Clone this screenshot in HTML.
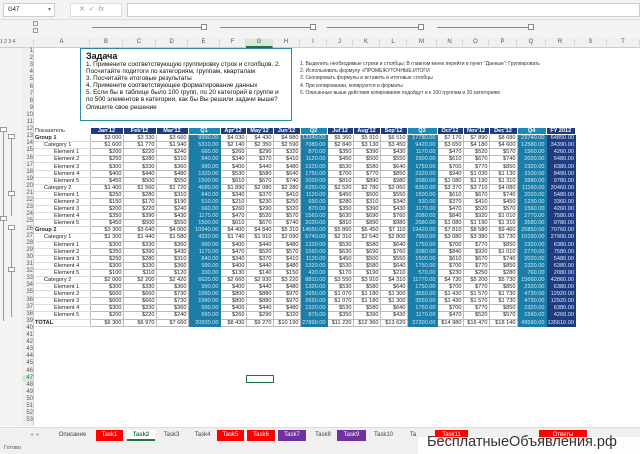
<!DOCTYPE html>
<html><head><meta charset="utf-8"><style>
*{margin:0;padding:0;box-sizing:border-box}
body{width:640px;height:454px;overflow:hidden;background:#fff;font-family:"Liberation Sans","DejaVu Sans",sans-serif;position:relative;color:#222}
.a{position:absolute}
#top{left:0;top:0;width:640px;height:20px;background:#f3f3f3;border-bottom:1px solid #ddd}
#ol{left:0;top:20px;width:640px;height:18px;background:#f3f3f3}
#ch{left:0;top:38px;width:640px;height:10px;background:#f0f0f0;border-bottom:1px solid #ccc;font-size:6px;color:#555}
#ch span{position:absolute;top:1px;text-align:center;border-right:1px solid #d6d6d6;height:9px}
#rh{left:22px;top:48px;width:12px;height:378px;background:#f0f0f0;border-right:1px solid #ccc}
#rh div{position:absolute;left:0;width:11px;text-align:right;font-size:6px;line-height:7px;color:#555}
#gut{left:0;top:48px;width:22px;height:378px;background:#f3f3f3}
table{position:absolute;left:34px;top:127px;border-collapse:collapse;table-layout:fixed;font-size:5.6px}
td{height:7.1px;line-height:6px;padding:0 1px;text-align:right;border:1px solid #bbb;white-space:nowrap;overflow:hidden}
td.l{text-align:left;border:none;border-bottom:1px solid #ddd}
td.q{background:#1b7ea8;color:#cfeaf5;border-color:#1b7ea8}
td.f{background:#1f3c80;color:#dde6ff;border-color:#1f3c80}
tr.h td{background:#1f3c80;color:#fff;font-weight:bold;text-align:center;border-color:#fff}
tr.h td.q{background:#1b8ab8;color:#fff}
tr.h td.l{background:#fff;color:#333;font-weight:normal;text-align:left}
.g td.l{font-weight:bold}
.c td.l{padding-left:10px}
.e td.l{padding-left:20px}
#box{left:80px;top:48px;width:212px;height:73px;border:1.5px solid #2a8aa0;background:#fff;padding:3px 5px;font-size:6.4px;line-height:7.1px;color:#111}
#box b{font-size:9px;line-height:9px;display:block}
#notes{left:300px;top:61px;font-size:5px;line-height:7.2px;color:#333}
#tabs{left:0;top:427px;width:640px;height:15px;background:#f0f0f0;border-top:1px solid #ddd;font-size:6px}
#tabs span{position:absolute;top:2px;height:11px;line-height:11px;text-align:center;color:#444}
.r{background:#f00;color:#fff!important}.p{background:#7030a0;color:#fff!important}
#st{left:0;top:442px;width:640px;height:12px;background:#f0f0f0;font-size:5.5px;color:#555}
</style></head><body>
<div id="top" class="a">
<div class="a" style="left:3px;top:3px;width:52px;height:14px;background:#fff;border:1px solid #ccc;font-size:6px;line-height:12px;padding-left:4px">G47<span style="position:absolute;right:3px;color:#777">▾</span></div>
<div class="a" style="left:70px;top:3px;width:52px;height:14px;background:#fff;border:1px solid #ddd;font-size:7px;color:#999;line-height:12px;padding-left:8px">✕ &nbsp;✓ &nbsp;<i>fx</i></div>
<div class="a" style="left:127px;top:3px;width:513px;height:14px;background:#fff;border:1px solid #ccc"></div>
</div>
<div id="ol" class="a">
<div class="a" style="left:33px;top:1px;width:5px;height:5px;border:1px solid #999"></div>
<div class="a" style="left:33px;top:8px;width:5px;height:5px;border:1px solid #999"></div>
<div class="a" style="left:92px;top:7px;width:112px;border-top:1px solid #888"></div><div class="a" style="left:201px;top:4px;width:6px;height:6px;border:1px solid #888;background:#fff"></div>
<div class="a" style="left:220px;top:7px;width:92px;border-top:1px solid #888"></div><div class="a" style="left:310px;top:4px;width:6px;height:6px;border:1px solid #888;background:#fff"></div>
<div class="a" style="left:327px;top:7px;width:93px;border-top:1px solid #888"></div><div class="a" style="left:418px;top:4px;width:6px;height:6px;border:1px solid #888;background:#fff"></div>
<div class="a" style="left:437px;top:7px;width:93px;border-top:1px solid #888"></div><div class="a" style="left:528px;top:4px;width:6px;height:6px;border:1px solid #888;background:#fff"></div>
</div>
<div id="ch" class="a">
<span style="left:0;width:34px;font-size:5px;text-align:left">1 2 3 4</span>
<span style="left:34px;width:56px">A</span><span style="left:90px;width:33px">B</span><span style="left:123px;width:33px">C</span><span style="left:156px;width:32px">D</span><span style="left:188px;width:32px">E</span><span style="left:220px;width:26px">F</span><span style="left:246px;width:27px;background:#d6e8d6;border-bottom:2px solid #217346">G</span><span style="left:273px;width:27px">H</span><span style="left:300px;width:27px">I</span><span style="left:327px;width:26px">J</span><span style="left:353px;width:27px">K</span><span style="left:380px;width:27px">L</span><span style="left:407px;width:30px">M</span><span style="left:437px;width:26px">N</span><span style="left:463px;width:26px">O</span><span style="left:489px;width:28px">P</span><span style="left:517px;width:29px">Q</span><span style="left:546px;width:29px">R</span><span style="left:575px;width:32px">S</span><span style="left:607px;width:33px">T</span>
</div>
<div id="gut" class="a">
<div class="a" style="left:3px;top:81px;height:192px;border-left:1px solid #999"></div>
<div class="a" style="left:11px;top:88px;height:80px;border-left:1px solid #999"></div>
<div class="a" style="left:11px;top:179px;height:90px;border-left:1px solid #999"></div>
<div class="a" style="left:0px;top:79px;width:7px;height:5px;border:1px solid #999;background:#fff"></div>
<div class="a" style="left:8px;top:86px;width:7px;height:5px;border:1px solid #999;background:#fff"></div>
<div class="a" style="left:8px;top:143px;width:7px;height:5px;border:1px solid #999;background:#fff"></div>
<div class="a" style="left:0px;top:168px;width:7px;height:5px;border:1px solid #999;background:#fff"></div>
<div class="a" style="left:8px;top:177px;width:7px;height:5px;border:1px solid #999;background:#fff"></div>
<div class="a" style="left:8px;top:219px;width:7px;height:5px;border:1px solid #999;background:#fff"></div>
</div>
<div id="rh" class="a">
<div style="top:0">1</div><div style="top:7.1px">2</div><div style="top:14.2px">3</div><div style="top:21.3px">4</div><div style="top:28.4px">5</div><div style="top:35.5px">6</div><div style="top:42.6px">7</div><div style="top:49.7px">8</div><div style="top:56.8px">9</div><div style="top:63.9px">10</div><div style="top:71px">11</div><div style="top:78.1px">12</div><div style="top:85.2px">13</div><div style="top:92.3px">14</div><div style="top:99.4px">15</div><div style="top:106.5px">16</div><div style="top:113.6px">17</div><div style="top:120.7px">18</div><div style="top:127.8px">19</div><div style="top:134.9px">20</div><div style="top:142px">21</div><div style="top:149.1px">22</div><div style="top:156.2px">23</div><div style="top:163.3px">24</div><div style="top:170.4px">25</div><div style="top:177.5px">26</div><div style="top:184.6px">27</div><div style="top:191.7px">28</div><div style="top:198.8px">29</div><div style="top:205.9px">30</div><div style="top:213px">31</div><div style="top:220.1px">32</div><div style="top:227.2px">33</div><div style="top:234.3px">34</div><div style="top:241.4px">35</div><div style="top:248.5px">36</div><div style="top:255.6px">37</div><div style="top:262.7px">38</div><div style="top:269.8px">39</div><div style="top:276.9px">40</div><div style="top:284px">41</div><div style="top:291.1px">42</div><div style="top:298.2px">43</div><div style="top:305.3px">44</div><div style="top:312.4px">45</div><div style="top:319.5px">46</div><div style="top:326.6px;background:#d6e8d6;color:#217346">47</div><div style="top:333.7px">48</div><div style="top:340.8px">49</div><div style="top:347.9px">50</div><div style="top:355px">51</div><div style="top:362.1px">52</div><div style="top:369.2px">53</div>
</div>
<div id="box" class="a"><b>Задача</b>1. Примените соответствующую группировку строк и столбцов. 2. Посчитайте подитоги по категориям, группам, кварталам<br>3. Посчитайте итоговые результаты<br>4. Примените соответствующее форматирование данных<br>5. Если бы в таблице было 100 групп, по 20 категорий в группе и по 500 элементов в категории, как бы Вы решили задачи выше?<br>Опишите свое решение</div>
<div id="notes" class="a">1. Выделить необходимые строки и столбцы; В главном меню перейти в пункт "Данные"; Группировать<br>2. Использовать формулу «ПРОМЕЖУТОЧНЫЕ.ИТОГИ<br>3. Скопировать формулы и вставить в итоговые столбцы<br>4. При копировании, копируются и форматы<br>5. Описанные выше действия копирования подойдут и к 100 группам и 20 категориям</div>
<table>
<colgroup><col style="width:56px"><col style="width:33px"><col style="width:33px"><col style="width:32px"><col style="width:32px"><col style="width:26px"><col style="width:27px"><col style="width:27px"><col style="width:27px"><col style="width:26px"><col style="width:27px"><col style="width:27px"><col style="width:30px"><col style="width:26px"><col style="width:26px"><col style="width:28px"><col style="width:29px"><col style="width:29px"></colgroup>
<tr class="h"><td class="l">Показатель</td><td>Jan'12</td><td>Feb'12</td><td>Mar'12</td><td class="q">Q1</td><td>Apr'12</td><td>May'12</td><td>Jun'12</td><td class="q">Q2</td><td>Jul'12</td><td>Aug'12</td><td>Sep'12</td><td class="q">Q3</td><td>Oct'12</td><td>Nov'12</td><td>Dec'12</td><td class="q">Q4</td><td>FY 2012</td></tr>
<tr class="g"><td class="l">Group 1</td><td>$3 000</td><td>$3 330</td><td>$3 660</td><td class="q">9990.00</td><td>$4 030</td><td>$4 430</td><td>$4 880</td><td class="q">13340.00</td><td>$5 360</td><td>$5 910</td><td>$6 510</td><td class="q">17780.00</td><td>$7 170</td><td>$7 890</td><td>$8 680</td><td class="q">23740.00</td><td class="f">64850.00</td></tr>
<tr class="c"><td class="l">Category 1</td><td>$1 600</td><td>$1 770</td><td>$1 940</td><td class="q">5310.00</td><td>$2 140</td><td>$2 350</td><td>$2 590</td><td class="q">7080.00</td><td>$2 840</td><td>$3 130</td><td>$3 450</td><td class="q">9420.00</td><td>$3 650</td><td>$4 180</td><td>$4 600</td><td class="q">12580.00</td><td class="f">34390.00</td></tr>
<tr class="e"><td class="l">Element 1</td><td>$200</td><td>$220</td><td>$240</td><td class="q">660.00</td><td>$260</td><td>$290</td><td>$320</td><td class="q">870.00</td><td>$350</td><td>$390</td><td>$430</td><td class="q">1170.00</td><td>$470</td><td>$520</td><td>$570</td><td class="q">1560.00</td><td class="f">4260.00</td></tr>
<tr class="e"><td class="l">Element 2</td><td>$250</td><td>$280</td><td>$310</td><td class="q">840.00</td><td>$340</td><td>$370</td><td>$410</td><td class="q">1120.00</td><td>$450</td><td>$500</td><td>$550</td><td class="q">1500.00</td><td>$610</td><td>$670</td><td>$740</td><td class="q">2020.00</td><td class="f">5480.00</td></tr>
<tr class="e"><td class="l">Element 3</td><td>$300</td><td>$330</td><td>$360</td><td class="q">990.00</td><td>$400</td><td>$440</td><td>$480</td><td class="q">1320.00</td><td>$530</td><td>$580</td><td>$640</td><td class="q">1750.00</td><td>$700</td><td>$770</td><td>$850</td><td class="q">2320.00</td><td class="f">6380.00</td></tr>
<tr class="e"><td class="l">Element 4</td><td>$400</td><td>$440</td><td>$480</td><td class="q">1320.00</td><td>$530</td><td>$580</td><td>$640</td><td class="q">1750.00</td><td>$700</td><td>$770</td><td>$850</td><td class="q">2320.00</td><td>$940</td><td>$1 030</td><td>$1 130</td><td class="q">3100.00</td><td class="f">8490.00</td></tr>
<tr class="e"><td class="l">Element 5</td><td>$450</td><td>$500</td><td>$550</td><td class="q">1500.00</td><td>$610</td><td>$670</td><td>$740</td><td class="q">2020.00</td><td>$810</td><td>$890</td><td>$980</td><td class="q">2680.00</td><td>$1 080</td><td>$1 190</td><td>$1 310</td><td class="q">3580.00</td><td class="f">9780.00</td></tr>
<tr class="c"><td class="l">Category 2</td><td>$1 400</td><td>$1 560</td><td>$1 720</td><td class="q">4680.00</td><td>$1 890</td><td>$2 080</td><td>$2 280</td><td class="q">6250.00</td><td>$2 520</td><td>$2 780</td><td>$3 060</td><td class="q">8360.00</td><td>$3 370</td><td>$3 710</td><td>$4 080</td><td class="q">11160.00</td><td class="f">30460.00</td></tr>
<tr class="e"><td class="l">Element 1</td><td>$250</td><td>$280</td><td>$310</td><td class="q">840.00</td><td>$340</td><td>$370</td><td>$410</td><td class="q">1120.00</td><td>$450</td><td>$500</td><td>$550</td><td class="q">1500.00</td><td>$610</td><td>$670</td><td>$740</td><td class="q">2020.00</td><td class="f">5480.00</td></tr>
<tr class="e"><td class="l">Element 2</td><td>$150</td><td>$170</td><td>$190</td><td class="q">510.00</td><td>$210</td><td>$230</td><td>$250</td><td class="q">690.00</td><td>$280</td><td>$310</td><td>$340</td><td class="q">930.00</td><td>$370</td><td>$410</td><td>$450</td><td class="q">1230.00</td><td class="f">3360.00</td></tr>
<tr class="e"><td class="l">Element 3</td><td>$200</td><td>$220</td><td>$240</td><td class="q">660.00</td><td>$260</td><td>$290</td><td>$320</td><td class="q">870.00</td><td>$350</td><td>$390</td><td>$430</td><td class="q">1170.00</td><td>$470</td><td>$520</td><td>$570</td><td class="q">1560.00</td><td class="f">4260.00</td></tr>
<tr class="e"><td class="l">Element 4</td><td>$350</td><td>$390</td><td>$430</td><td class="q">1170.00</td><td>$470</td><td>$520</td><td>$570</td><td class="q">1560.00</td><td>$630</td><td>$690</td><td>$760</td><td class="q">2080.00</td><td>$840</td><td>$920</td><td>$1 010</td><td class="q">2770.00</td><td class="f">7580.00</td></tr>
<tr class="e"><td class="l">Element 5</td><td>$450</td><td>$500</td><td>$550</td><td class="q">1500.00</td><td>$610</td><td>$670</td><td>$740</td><td class="q">2020.00</td><td>$810</td><td>$890</td><td>$980</td><td class="q">2680.00</td><td>$1 080</td><td>$1 190</td><td>$1 310</td><td class="q">3580.00</td><td class="f">9780.00</td></tr>
<tr class="g"><td class="l">Group 2</td><td>$3 300</td><td>$3 640</td><td>$4 000</td><td class="q">10940.00</td><td>$4 400</td><td>$4 840</td><td>$5 310</td><td class="q">14550.00</td><td>$5 860</td><td>$6 450</td><td>$7 110</td><td class="q">19420.00</td><td>$7 810</td><td>$8 580</td><td>$9 460</td><td class="q">25850.00</td><td class="f">70760.00</td></tr>
<tr class="c"><td class="l">Category 1</td><td>$1 300</td><td>$1 440</td><td>$1 580</td><td class="q">4320.00</td><td>$1 740</td><td>$1 910</td><td>$2 090</td><td class="q">5740.00</td><td>$2 310</td><td>$2 540</td><td>$2 800</td><td class="q">7650.00</td><td>$3 080</td><td>$3 380</td><td>$3 730</td><td class="q">10190.00</td><td class="f">27900.00</td></tr>
<tr class="e"><td class="l">Element 1</td><td>$300</td><td>$330</td><td>$360</td><td class="q">990.00</td><td>$400</td><td>$440</td><td>$480</td><td class="q">1320.00</td><td>$530</td><td>$580</td><td>$640</td><td class="q">1750.00</td><td>$700</td><td>$770</td><td>$850</td><td class="q">2320.00</td><td class="f">6380.00</td></tr>
<tr class="e"><td class="l">Element 2</td><td>$350</td><td>$390</td><td>$430</td><td class="q">1170.00</td><td>$470</td><td>$520</td><td>$570</td><td class="q">1560.00</td><td>$630</td><td>$690</td><td>$760</td><td class="q">2080.00</td><td>$840</td><td>$920</td><td>$1 010</td><td class="q">2770.00</td><td class="f">7580.00</td></tr>
<tr class="e"><td class="l">Element 3</td><td>$250</td><td>$280</td><td>$310</td><td class="q">840.00</td><td>$340</td><td>$370</td><td>$410</td><td class="q">1120.00</td><td>$450</td><td>$500</td><td>$550</td><td class="q">1500.00</td><td>$610</td><td>$670</td><td>$740</td><td class="q">2020.00</td><td class="f">5480.00</td></tr>
<tr class="e"><td class="l">Element 4</td><td>$300</td><td>$330</td><td>$360</td><td class="q">990.00</td><td>$400</td><td>$440</td><td>$480</td><td class="q">1320.00</td><td>$530</td><td>$580</td><td>$640</td><td class="q">1750.00</td><td>$700</td><td>$770</td><td>$850</td><td class="q">2320.00</td><td class="f">6380.00</td></tr>
<tr class="e"><td class="l">Element 5</td><td>$100</td><td>$110</td><td>$120</td><td class="q">330.00</td><td>$130</td><td>$140</td><td>$150</td><td class="q">420.00</td><td>$170</td><td>$190</td><td>$210</td><td class="q">570.00</td><td>$230</td><td>$250</td><td>$280</td><td class="q">760.00</td><td class="f">2080.00</td></tr>
<tr class="c"><td class="l">Category 2</td><td>$2 000</td><td>$2 200</td><td>$2 420</td><td class="q">6620.00</td><td>$2 660</td><td>$2 930</td><td>$3 220</td><td class="q">8810.00</td><td>$3 550</td><td>$3 910</td><td>$4 310</td><td class="q">11770.00</td><td>$4 730</td><td>$5 200</td><td>$5 730</td><td class="q">15660.00</td><td class="f">42860.00</td></tr>
<tr class="e"><td class="l">Element 1</td><td>$300</td><td>$330</td><td>$360</td><td class="q">990.00</td><td>$400</td><td>$440</td><td>$480</td><td class="q">1320.00</td><td>$530</td><td>$580</td><td>$640</td><td class="q">1750.00</td><td>$700</td><td>$770</td><td>$850</td><td class="q">2320.00</td><td class="f">6380.00</td></tr>
<tr class="e"><td class="l">Element 2</td><td>$600</td><td>$660</td><td>$730</td><td class="q">1990.00</td><td>$800</td><td>$880</td><td>$970</td><td class="q">2650.00</td><td>$1 070</td><td>$1 180</td><td>$1 300</td><td class="q">3550.00</td><td>$1 430</td><td>$1 570</td><td>$1 730</td><td class="q">4730.00</td><td class="f">12920.00</td></tr>
<tr class="e"><td class="l">Element 3</td><td>$600</td><td>$660</td><td>$730</td><td class="q">1990.00</td><td>$800</td><td>$880</td><td>$970</td><td class="q">2650.00</td><td>$1 070</td><td>$1 180</td><td>$1 300</td><td class="q">3550.00</td><td>$1 430</td><td>$1 570</td><td>$1 730</td><td class="q">4730.00</td><td class="f">12920.00</td></tr>
<tr class="e"><td class="l">Element 4</td><td>$300</td><td>$330</td><td>$360</td><td class="q">990.00</td><td>$400</td><td>$440</td><td>$480</td><td class="q">1320.00</td><td>$530</td><td>$580</td><td>$640</td><td class="q">1750.00</td><td>$700</td><td>$770</td><td>$850</td><td class="q">2320.00</td><td class="f">6380.00</td></tr>
<tr class="e"><td class="l">Element 5</td><td>$200</td><td>$220</td><td>$240</td><td class="q">660.00</td><td>$260</td><td>$290</td><td>$320</td><td class="q">870.00</td><td>$350</td><td>$390</td><td>$430</td><td class="q">1170.00</td><td>$470</td><td>$520</td><td>$570</td><td class="q">1560.00</td><td class="f">4260.00</td></tr>
<tr class="g"><td class="l">TOTAL</td><td>$6 300</td><td>$6 970</td><td>$7 660</td><td class="q">20930.00</td><td>$8 430</td><td>$9 270</td><td>$10 190</td><td class="q">27890.00</td><td>$11 220</td><td>$12 360</td><td>$13 620</td><td class="q">37200.00</td><td>$14 980</td><td>$16 470</td><td>$18 140</td><td class="q">49590.00</td><td class="f">135610.00</td></tr>
</table>
<div class="a" style="left:246px;top:375px;width:28px;height:8px;border:1.5px solid #217346"></div>
<div id="tabs" class="a">
<span style="left:30px;color:#aaa">◂ &nbsp;▸</span>
<span style="left:57px;width:31px">Описание</span>
<span class="r" style="left:96px;width:27px">Task1</span>
<span style="left:127px;width:28px;background:#fff;color:#217346;border-bottom:2px solid #217346;font-weight:bold">Task2</span>
<span style="left:159px;width:25px">Task3</span>
<span style="left:190px;width:25px">Task4</span>
<span class="r" style="left:217px;width:27px">Task5</span>
<span class="r" style="left:247px;width:28px">Task6</span>
<span class="p" style="left:278px;width:28px">Task7</span>
<span style="left:310px;width:26px">Task8</span>
<span class="p" style="left:337px;width:29px">Task9</span>
<span style="left:369px;width:29px">Task10</span>
<span style="left:403px;width:20px">Ta</span>
<span class="r" style="left:435px;width:33px">Task11</span>
<span class="r" style="left:539px;width:48px">Ответы</span>
</div>
<div id="st" class="a"><span class="a" style="left:4px;top:3px">Готово</span></div>
<div class="a" style="left:418px;top:437px;width:222px;height:17px;background:rgba(255,255,255,.85)"></div>
<div class="a" style="left:427px;top:433px;font-size:14.5px;line-height:19px;color:#333;white-space:nowrap">БесплатныеОбъявления.рф</div>
</body></html>
